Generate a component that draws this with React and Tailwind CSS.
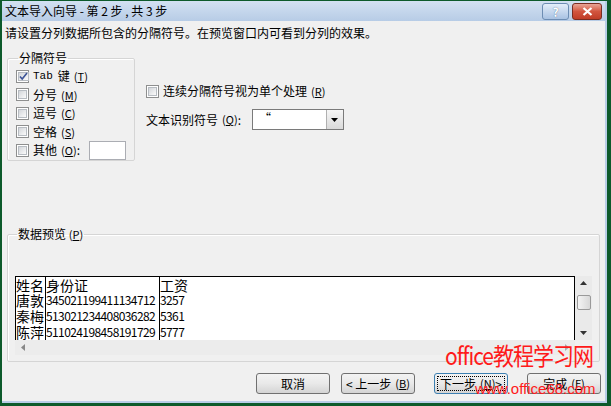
import React from 'react';

const FONT = { fontFamily: '"Noto Sans CJK SC", "Noto Sans", sans-serif' };

const Check = ({ checked }) => (
  <span className="w-[13px] h-[13px] shrink-0 border border-[#8e8f8f] bg-white p-[1px] flex">
    <span className="flex-1 border border-[#b7bcc2] bg-gradient-to-br from-[#d3d6da] to-[#fbfbfb] flex items-center justify-center">
      {checked && (
        <svg className="w-[9px] h-[9px]" viewBox="0 0 9 9">
          <path d="M1 4.5l2.2 2.6L8 1" fill="none" stroke="#3d5497" strokeWidth="1.6" />
        </svg>
      )}
    </span>
  </span>
);

const Key = ({ k }) => (
  <span className="ml-[4px] text-[11px]">(<span className="underline">{k}</span>)</span>
);

const Btn = ({ children, focus }) => (
  <button
    className={`w-[74px] h-[21px] rounded-[3px] border text-[12px] leading-none flex items-center justify-center bg-gradient-to-b from-[#f3f3f3] via-[#e9e9e9] to-[#d4d4d4] ${
      focus ? 'border-[#3c7fb1] p-[2px]' : 'border-[#707070]'
    }`}
  >
    {focus ? (
      <span className="w-full h-full border border-dotted border-black flex items-center justify-center">{children}</span>
    ) : (
      children
    )}
  </button>
);

const rows = [
  ['姓名', '身份证', '工资'],
  ['唐敦', '345021199411134712', '3257'],
  ['秦梅', '513021234408036282', '5361'],
  ['陈萍', '511024198458191729', '5777'],
];

export default function App() {
  return (
    <div className="w-[611px] h-[406px] bg-[#0d5a2b] pl-[2px] pt-[1px] pr-[4px] pb-[3px]" style={FONT}>
      <div className="w-full h-full flex flex-col border-r-[2px] border-b-[2px] border-[#b8cde6] relative">
        {/* 标题栏 */}
        <div className="h-[20px] bg-gradient-to-b from-[#d3e1f2] to-[#b7cce6] flex items-center pl-[3px] pr-[3px]">
          <span className="text-[12px] text-black flex-1">文本导入向导 - 第 2 步 , 共 3 步</span>
          <div className="flex gap-[3px] items-center mt-[1px]">
            <div className="w-[27px] h-[17px] rounded-[3px] border border-[#6d8db3] bg-gradient-to-b from-[#e4eefa] to-[#a9c2e2] flex items-center justify-center text-[12px] font-bold text-white leading-none" style={{ textShadow: '0 0 1px #3b587f' }}>?</div>
            <div className="w-[30px] h-[17px] rounded-[3px] border border-[#7a2d22] bg-gradient-to-b from-[#e8a496] via-[#d2553f] to-[#c03d27] flex items-center justify-center">
              <svg className="w-[11px] h-[9px]" viewBox="0 0 11 9">
                <path d="M1.5 1l8 7M9.5 1l-8 7" stroke="#fff" strokeWidth="2.2" />
              </svg>
            </div>
          </div>
        </div>

        {/* 主体 */}
        <div className="flex-1 bg-[#f0f0f0] px-[3px] pt-[5px] text-[12px] text-black flex flex-col">
          <div className="leading-[14px]">请设置分列数据所包含的分隔符号。在预览窗口内可看到分列的效果。</div>

          <div className="flex mt-[11px] ml-[2px]">
            <fieldset className="w-[128px] h-[110px] border border-[#d5d5d5] rounded-[2px] px-[8px] shadow-[inset_1px_1px_0_#fff]">
              <legend className="px-[1px] ml-[2px] leading-[14px] text-[12px]">分隔符号</legend>
              <div className="flex flex-col pt-[2px]">
                <div className="h-[18.5px] flex items-center">
                  <Check checked />
                  <span className="ml-[4px] text-[11px]" style={{ fontFamily: '"Liberation Mono", monospace' }}>Tab</span>
                  <span className="ml-[5px]">键</span>
                  <Key k="T" />
                </div>
                <div className="h-[18.5px] flex items-center"><Check /><span className="ml-[4px]">分号</span><Key k="M" /></div>
                <div className="h-[18.5px] flex items-center"><Check /><span className="ml-[4px]">逗号</span><Key k="C" /></div>
                <div className="h-[18.5px] flex items-center"><Check /><span className="ml-[4px]">空格</span><Key k="S" /></div>
                <div className="h-[18.5px] flex items-center">
                  <Check /><span className="ml-[4px]">其他</span><Key k="O" /><span>:</span>
                  <span className="ml-auto w-[37px] h-[19px] bg-white border border-[#abadb3]" />
                </div>
              </div>
            </fieldset>

            <div className="ml-[11px] pt-[33px] flex flex-col">
              <div className="flex items-center h-[14px]">
                <Check />
                <span className="ml-[4px]">连续分隔符号视为单个处理</span>
                <Key k="R" />
              </div>
              <div className="flex items-center mt-[11px] h-[21px]">
                <span>文本识别符号</span>
                <Key k="Q" />
                <span>:</span>
                <div className="ml-[11px] w-[92px] h-[21px] bg-white border border-[#7a7a7a] flex">
                  <span className="flex-1 pl-[6px] leading-[16px] text-black">“</span>
                  <span className="w-[17px] h-full border-l border-[#b0b0b0] bg-gradient-to-b from-[#f6f6f6] to-[#dadada] flex items-center justify-center">
                    <svg className="w-[7px] h-[4px]" viewBox="0 0 7 4"><path d="M0 0h7L3.5 4z" fill="#000" /></svg>
                  </span>
                </div>
              </div>
            </div>
          </div>

          {/* 数据预览 */}
          <fieldset className="mt-[66px] ml-[2px] mr-[2px] h-[135px] border border-[#d5d5d5] rounded-[2px] px-[7px] shadow-[inset_1px_1px_0_#fff]">
            <legend className="px-[1px] ml-[2px] leading-[14px] text-[12px]">数据预览 <span className="text-[11px]">(<span className="underline">P</span>)</span></legend>
            <div className="mt-[35px] flex">
              <div className="w-[560px] h-[64px] bg-white border-t border-l border-r border-black overflow-hidden flex">
                {[0, 1, 2].map((c) => (
                  <div key={c} className={`flex flex-col ${c === 0 ? 'w-[30px]' : c === 1 ? 'w-[114px]' : 'flex-1'} ${c < 2 ? 'border-r border-black' : ''}`}>
                    {rows.map((r, i) => (
                      <div key={i} className={`h-[15.6px] flex items-center ${i > 0 && c > 0 ? 'text-[12px] tracking-[-0.6px]' : 'text-[14px]'} leading-none`}>
                        {r[c]}
                      </div>
                    ))}
                  </div>
                ))}
              </div>
              <div className="w-[17px] h-[64px] bg-[#eaeaea] flex flex-col items-center justify-between py-[5px]">
                <svg className="w-[7px] h-[4px]" viewBox="0 0 7 4"><path d="M0 4h7L3.5 0z" fill="#333" /></svg>
                <div className="w-[14px] h-[15px] -mt-[12px] rounded-[2px] border border-[#9a9a9a] bg-gradient-to-r from-[#f4f4f4] to-[#d8d8d8]" />
                <svg className="w-[7px] h-[4px]" viewBox="0 0 7 4"><path d="M0 0h7L3.5 4z" fill="#333" /></svg>
              </div>
            </div>
            <div className="w-[560px] h-[15px] bg-[#ececec] flex items-center justify-between px-[6px]">
              <svg className="w-[4px] h-[7px]" viewBox="0 0 4 7"><path d="M4 0v7L0 3.5z" fill="#888" /></svg>
              <svg className="w-[4px] h-[7px]" viewBox="0 0 4 7"><path d="M0 0v7L4 3.5z" fill="#aaa" /></svg>
            </div>
          </fieldset>

          <div className="flex items-center justify-end gap-[20px] mt-[11px] mr-[1px]">
            <Btn>取消</Btn>
            <div className="flex gap-[19px] -ml-[9px]">
              <Btn>&lt; 上一步 <span className="ml-[4px] text-[11px]">(<span className="underline">B</span>)</span></Btn>
              <Btn focus>下一步 <span className="ml-[4px] text-[11px]">(<span className="underline">N</span>)</span> &gt;</Btn>
              <Btn>完成 <span className="ml-[4px] text-[11px]">(<span className="underline">F</span>)</span></Btn>
            </div>
          </div>
        </div>

        {/* 水印 */}
        <div className="absolute left-[443px] top-[342px] text-[#ff1a1a] text-[21px] leading-none scale-y-[1.15] origin-top whitespace-nowrap tracking-[-1px]">office教程学习网</div>
        <div className="absolute left-[473px] top-[380px] text-[#ff1a1a] text-[15px] leading-none whitespace-nowrap" style={{ fontFamily: '"Liberation Sans", sans-serif' }}>www.office68.com</div>
      </div>
    </div>
  );
}
